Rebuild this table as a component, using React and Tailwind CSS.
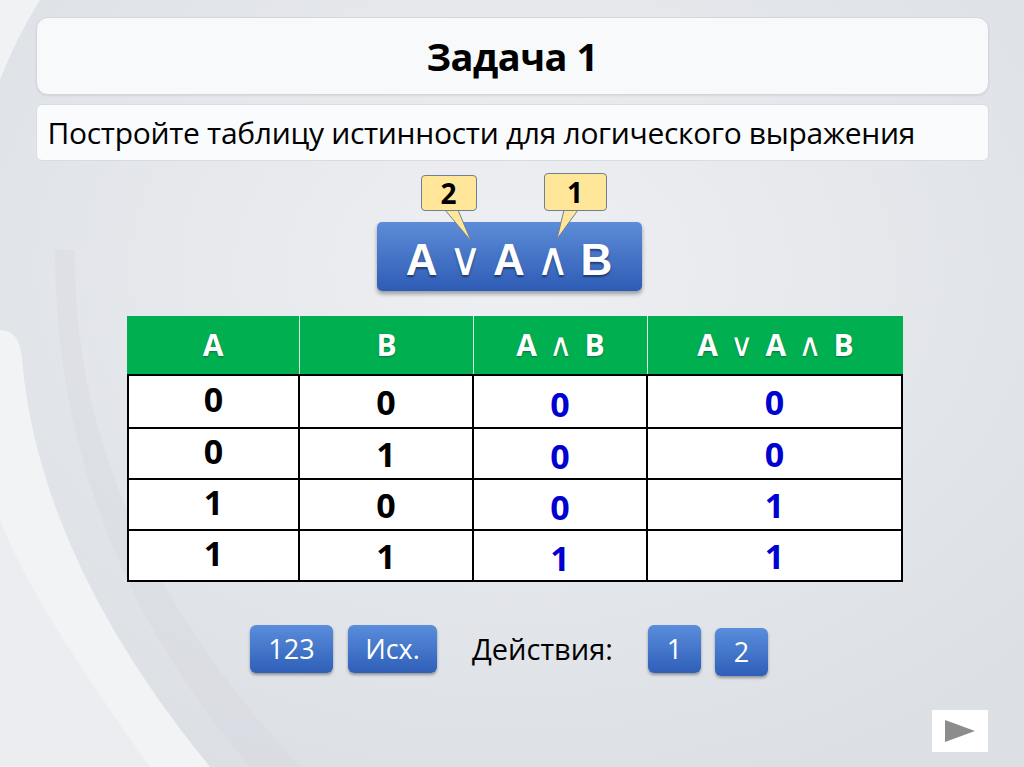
import React from "react";

const font = { fontFamily: '"Open Sans", "Noto Sans", sans-serif' };

function Callout({ label, className, tail }) {
  return (
    <div className={`absolute ${className}`}>
      <svg className="absolute left-0 top-0 overflow-visible" width="1" height="1">
        <polygon points={tail} fill="#ffe699" stroke="#6f7f95" strokeWidth="1" />
      </svg>
      <div className="relative w-full h-full rounded-[4px] border border-[#6f7f95] bg-[#ffe699] flex items-center justify-center text-[28px] font-bold text-black leading-none [text-shadow:none]" style={font}>
        {label}
      </div>
    </div>
  );
}

function Op({ children, className }) {
  return (
    <span className={`font-normal ${className}`} style={{ fontFamily: '"DejaVu Sans", sans-serif' }}>
      {children}
    </span>
  );
}

const rows = [
  ["0", "0", "0", "0"],
  ["0", "1", "0", "0"],
  ["1", "0", "0", "1"],
  ["1", "1", "1", "1"],
];

function BlueButton({ children, className }) {
  return (
    <div className={`h-[48px] rounded-[6px] bg-gradient-to-b from-[#5a8ddb] to-[#2f5fb9] shadow-[0_2px_3px_rgba(0,0,0,0.35)] flex items-center justify-center text-white text-[27px] ${className}`}>
      {children}
    </div>
  );
}

export default function App() {
  const hop = "text-[32px] mx-[12px]";
  const eop = "text-[46px] mx-[11px]";
  return (
    <div className="relative w-[1024px] h-[767px] overflow-hidden bg-[#e1e4e9]" style={font}>
      {/* background swooshes */}
      <svg className="absolute inset-0" width="1024" height="767">
        <defs>
          <radialGradient id="glow" cx="0.5" cy="0.35" r="0.7">
            <stop offset="0" stopColor="#eef0f3" />
            <stop offset="1" stopColor="#dcdfe4" />
          </radialGradient>
        </defs>
        <rect width="1024" height="767" fill="url(#glow)" />
        <path d="M0 330 Q20 330 22 360 Q40 560 210 767 L0 767 Z" fill="#eceef1" opacity="0.9" />
        <path d="M0 330 Q20 330 22 360 Q40 560 210 767 L150 767 Q30 600 0 520 Z" fill="#f3f4f6" opacity="0.8" />
        <path d="M40 0 Q15 40 0 80 L0 0 Z" fill="#f1f2f4" />
        <path d="M75 250 Q70 520 300 767 L250 767 Q55 540 55 250 Z" fill="#d6dae0" opacity="0.45" />
      </svg>

      <div className="relative flex flex-col items-center">
        <div className="mt-[17px] w-[953px] h-[78px] rounded-[12px] border border-[#d3d6db] bg-[#f8f9fa] shadow-[0_1px_2px_rgba(0,0,0,0.08)] flex items-center justify-center">
          <span className="text-[38px] font-bold text-black tracking-[-0.5px] leading-none">Задача 1</span>
        </div>
        <div className="mt-[9px] w-[953px] h-[57px] rounded-[6px] border border-[#d8dbe0] bg-[#fafbfc] flex items-center pl-[11px]">
          <span className="text-[30px] text-black tracking-[-0.3px] leading-none">Постройте таблицу истинности для логического выражения</span>
        </div>

        {/* expression */}
        <div className="relative mt-[61px] ml-[-6px] w-[265px] h-[69px] rounded-[5px] bg-gradient-to-b from-[#5d8cd8] to-[#2e5cb5] shadow-[0_3px_4px_rgba(0,0,0,0.35)] flex items-center justify-center text-white font-bold text-[44px] [text-shadow:0_2px_2px_rgba(0,0,0,0.45)]" style={{ fontFamily: '"Liberation Sans", Arial, sans-serif' }}>
          <span className="leading-[44px] relative top-[3px]">
            A<Op className={eop}>∨</Op>A<Op className={eop}>∧</Op>B
          </span>
          <Callout label="2" className="left-[44px] top-[-47px] w-[56px] h-[36px]" tail="24,35 37,35 50,66" />
          <Callout label="1" className="left-[167px] top-[-49px] w-[63px] h-[38px]" tail="20,37 34,37 13,66" />
        </div>

        {/* truth table */}
        <div className="mt-[25px] w-[776px] ml-[6px]">
          <div className="grid grid-cols-[173px_174px_174px_255px] h-[58px] bg-[#00b050] text-white font-bold text-[30px] leading-none [text-shadow:0_1px_2px_rgba(0,0,0,0.35)]">
            <div className="flex items-center justify-center border-r border-[#d9f2e3]">A</div>
            <div className="flex items-center justify-center border-r border-[#d9f2e3]">B</div>
            <div className="flex items-center justify-center border-r border-[#d9f2e3]">
              <span>A<Op className={hop}>∧</Op>B</span>
            </div>
            <div className="flex items-center justify-center">
              <span>A<Op className={hop}>∨</Op>A<Op className={hop}>∧</Op>B</span>
            </div>
          </div>
          <div className="border-2 border-black bg-white">
            {rows.map((r, i) => (
              <div key={i} className={`grid grid-cols-[171px_174px_174px_253px] h-[51px] text-[34px] font-bold leading-none ${i > 0 ? "border-t-2 border-black" : ""}`}>
                <div className="flex items-center justify-center border-r-2 border-black text-black pb-[5px]">{r[0]}</div>
                <div className="flex items-center justify-center border-r-2 border-black text-black">{r[1]}</div>
                <div className="flex items-center justify-center border-r-2 border-black text-[#0000d0] pt-[5px]">{r[2]}</div>
                <div className="flex items-center justify-center text-[#0000d0]">{r[3]}</div>
              </div>
            ))}
          </div>
        </div>

        {/* bottom controls */}
        <div className="mt-[40px] w-[1024px] flex items-center pl-[250px]">
          <BlueButton className="w-[83px]">123</BlueButton>
          <BlueButton className="w-[89px] ml-[15px]">Исх.</BlueButton>
          <span className="ml-[35px] text-[29px] text-black">Действия:</span>
          <BlueButton className="w-[53px] ml-[35px]">1</BlueButton>
          <BlueButton className="w-[53px] ml-[14px] mt-[6px]">2</BlueButton>
        </div>

        <div className="w-[1024px] flex justify-end pr-[36px] mt-[34px]">
          <div className="w-[56px] h-[42px] bg-white flex items-center justify-center">
            <svg width="32" height="22" viewBox="0 0 32 22">
              <polygon points="1,0 31,11 1,22" fill="#8c8c8c" />
            </svg>
          </div>
        </div>
      </div>
    </div>
  );
}
